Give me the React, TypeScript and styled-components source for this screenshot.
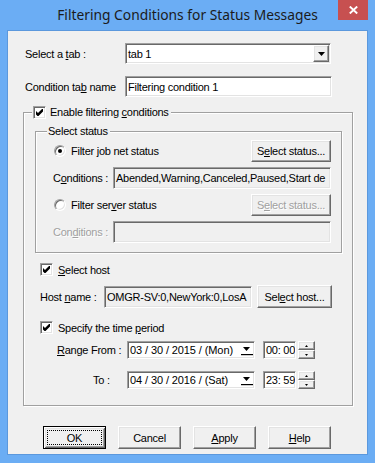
import React from "react";
import styled, { createGlobalStyle, css } from "styled-components";

const GlobalStyle = createGlobalStyle`
  html, body { margin: 0; padding: 0; background: #6badf4; }
  body {
    font-family: "Liberation Sans", Arial, sans-serif;
    font-size: 11px;
    letter-spacing: -0.25px;
    color: #000;
  }
  *, *::before, *::after { box-sizing: border-box; }
  u { text-decoration-thickness: 1px; text-underline-offset: 1px; }
`;

const sunken = css`
  border: 1px solid;
  border-color: #a0a0a0 #ffffff #ffffff #a0a0a0;
  box-shadow: inset 1px 1px 0 #696969, inset -1px -1px 0 #e3e3e3;
`;

const raised = css`
  border: 1px solid;
  border-color: #ffffff #696969 #696969 #ffffff;
  box-shadow: inset -1px -1px 0 #a0a0a0, inset 1px 1px 0 #e3e3e3;
  background: #f0f0f0;
`;

const Window = styled.div`
  width: 375px;
  height: 463px;
  background: #6badf4;
  display: flex;
  flex-direction: column;
`;

const TitleBar = styled.div`
  height: 30px;
  flex: none;
  display: grid;
  grid-template-columns: 37px 1fr 37px;
  align-items: start;
`;

const Title = styled.div`
  grid-column: 2;
  text-align: center;
  font-family: "Noto Sans", "Open Sans", sans-serif;
  font-size: 13.8px;
  letter-spacing: 0;
  line-height: 30px;
  color: #1b1b1b;
  white-space: nowrap;
`;

const CloseButton = styled.div`
  grid-column: 3;
  width: 30px;
  height: 20px;
  background: #c75050;
  display: flex;
  align-items: center;
  justify-content: center;
`;

const Client = styled.div`
  flex: 1;
  margin: 0 7px 8px 7px;
  background: #f0f0f0;
  border: 1px solid #5b98dd;
  display: flex;
  flex-direction: column;
  align-items: flex-start;
`;

const TopGrid = styled.div`
  display: grid;
  grid-template-columns: 100px 207px;
  grid-template-rows: 21px 21px;
  row-gap: 12px;
  align-items: center;
  margin: 12px 0 0 17px;
`;

const Label = styled.span<{ $w?: number; $indent?: number; $disabled?: boolean }>`
  white-space: nowrap;
  flex: none;
  width: ${(p) => (p.$w ? `${p.$w}px` : "auto")};
  padding-left: ${(p) => p.$indent ?? 0}px;
  color: ${(p) => (p.$disabled ? "#a0a0a0" : "#000")};
  text-shadow: ${(p) => (p.$disabled ? "1px 1px 0 #fff" : "none")};
`;

const Field = styled.div<{ $ro?: boolean; $w?: number; $h?: number }>`
  ${sunken};
  width: ${(p) => (p.$w ? `${p.$w}px` : "auto")};
  height: ${(p) => p.$h ?? 22}px;
  flex: ${(p) => (p.$w ? "none" : "1")};
  background: ${(p) => (p.$ro ? "#f0f0f0" : "#ffffff")};
  padding: 0 2px;
  display: flex;
  align-items: center;
  overflow: hidden;
  white-space: nowrap;
`;

const Combo = styled(Field)`
  padding: 0 1px 0 2px;
  justify-content: space-between;
`;

const DropButton = styled.span`
  ${raised};
  width: 16px;
  height: 17px;
  flex: none;
  display: flex;
  align-items: center;
  justify-content: center;
`;

const Group = styled.fieldset<{ $w: number }>`
  width: ${(p) => p.$w}px;
  min-inline-size: 0;
  margin: 0;
  padding: 0;
  border: 1px solid #a0a0a0;
  box-shadow: inset 1px 1px 0 #ffffff, 1px 1px 0 #ffffff;
`;

const OuterGroup = styled(Group)`
  margin: 9px 0 0 15px;
  padding-bottom: 16px;
`;

const InnerGroup = styled(Group)`
  margin: 6px 0 0 11px;
  padding: 0 10px 9px 0;
`;

const Legend = styled.legend<{ $offset: number }>`
  height: 13px;
  line-height: 13px;
  margin-left: ${(p) => p.$offset}px;
  padding: 0 2px 0 1px;
  background: #f0f0f0;
  display: flex;
  align-items: center;
  gap: 4px;
`;

const CheckBox = styled.span`
  ${sunken};
  width: 13px;
  height: 13px;
  flex: none;
  background: #ffffff;
  display: flex;
  align-items: center;
  justify-content: center;
`;

const RadioDot = styled.span<{ $on?: boolean }>`
  width: 12px;
  height: 12px;
  flex: none;
  border-radius: 50%;
  background: #ffffff;
  border: 1px solid;
  border-color: #a0a0a0 #ffffff #ffffff #a0a0a0;
  box-shadow: inset 1px 1px 0 #696969, inset -1px -1px 0 #e3e3e3;
  display: flex;
  align-items: center;
  justify-content: center;
  &::after {
    content: "";
    width: 4px;
    height: 4px;
    border-radius: 50%;
    background: #000;
    display: ${(p) => (p.$on ? "block" : "none")};
  }
`;

const StatusRow = styled.div<{ $top: number }>`
  height: 22px;
  margin-top: ${(p) => p.$top}px;
  padding-left: 18px;
  display: flex;
  align-items: center;
  justify-content: space-between;
`;

const Option = styled.label`
  display: flex;
  align-items: center;
  gap: 5px;
  white-space: nowrap;
`;

const FieldRow = styled.div<{ $top: number; $indent: number; $h?: number }>`
  height: ${(p) => p.$h ?? 22}px;
  margin-top: ${(p) => p.$top}px;
  padding-left: ${(p) => p.$indent}px;
  display: flex;
  align-items: center;
`;

const CheckRow = styled.label<{ $top: number }>`
  height: 13px;
  margin-top: ${(p) => p.$top}px;
  padding-left: 16px;
  display: flex;
  align-items: center;
  gap: 5px;
  white-space: nowrap;
`;

const PushButton = styled.button<{ $w: number; $h?: number; $gap?: number }>`
  ${raised};
  width: ${(p) => p.$w}px;
  height: ${(p) => p.$h ?? 23}px;
  margin-left: ${(p) => p.$gap ?? 0}px;
  flex: none;
  padding: 0;
  font: inherit;
  letter-spacing: inherit;
  color: #000;
  display: flex;
  align-items: center;
  justify-content: center;
  white-space: nowrap;
  &:disabled {
    color: #a0a0a0;
    text-shadow: 1px 1px 0 #ffffff;
  }
`;

const DefaultButton = styled(PushButton)`
  border-color: #000;
  box-shadow: inset 1px 1px 0 #ffffff, inset -1px -1px 0 #696969,
    inset 2px 2px 0 #e3e3e3, inset -2px -2px 0 #a0a0a0;
  padding: 3px;
`;

const FocusRect = styled.span`
  flex: 1;
  align-self: stretch;
  border: 1px dotted #000;
  display: flex;
  align-items: center;
  justify-content: center;
`;

const DateBox = styled(Field)`
  padding: 0 1px 0 2px;
  justify-content: space-between;
  letter-spacing: -0.1px;
`;

const TimeBox = styled(Field)`
  margin-left: 8px;
`;

const Spin = styled.div`
  width: 17px;
  height: 18px;
  margin-left: 2px;
  flex: none;
  display: flex;
  flex-direction: column;
`;

const SpinButton = styled.span`
  ${raised};
  flex: 1;
  display: flex;
  align-items: center;
  justify-content: center;
`;

const ButtonRow = styled.div`
  margin: 20px 0 0 35px;
  display: flex;
  gap: 12px;
`;

const CheckMark = () => (
  <svg width="7" height="7" viewBox="0 0 7 7">
    <polygon points="0,2 2,4 7,-1 7,2.5 2,7.5 0,5.5" fill="#000" />
  </svg>
);

const DownTriangle = () => (
  <svg width="7" height="4" viewBox="0 0 7 4">
    <polygon points="0,0 7,0 3.5,4" fill="#000" />
  </svg>
);

const DateDrop = () => (
  <svg width="12" height="12" viewBox="0 0 12 12">
    <polygon points="2,3 9,3 5.5,7" fill="#000" />
    <rect x="0" y="10" width="12" height="1.2" fill="#000" />
  </svg>
);

const SpinArrow = ({ up }: { up?: boolean }) => (
  <svg width="3" height="2" viewBox="0 0 3 2">
    <polygon points={up ? "1.5,0 3,2 0,2" : "0,0 3,0 1.5,2"} fill="#000" />
  </svg>
);

const CloseGlyph = () => (
  <svg width="9" height="8" viewBox="0 0 9 8">
    <path d="M0.8 0.5 L8.2 7.5 M8.2 0.5 L0.8 7.5" stroke="#fff" strokeWidth="1.9" />
  </svg>
);

function TimeSpin() {
  return (
    <Spin>
      <SpinButton>
        <SpinArrow up />
      </SpinButton>
      <SpinButton>
        <SpinArrow />
      </SpinButton>
    </Spin>
  );
}

export default function App() {
  return (
    <>
      <GlobalStyle />
      <Window>
        <TitleBar>
          <Title>Filtering Conditions for Status Messages</Title>
          <CloseButton>
            <CloseGlyph />
          </CloseButton>
        </TitleBar>
        <Client>
          <TopGrid>
            <Label>
              Select a <u>t</u>ab :
            </Label>
            <Combo $w={206} $h={21}>
              <span>tab 1</span>
              <DropButton>
                <DownTriangle />
              </DropButton>
            </Combo>
            <Label>
              Condition ta<u>b</u> name
            </Label>
            <Field $w={207} $h={21}>
              Filtering condition 1
            </Field>
          </TopGrid>

          <OuterGroup $w={330}>
            <Legend $offset={8}>
              <CheckBox>
                <CheckMark />
              </CheckBox>
              <span>
                Enable filtering <u>c</u>onditions
              </span>
            </Legend>

            <InnerGroup $w={307}>
              <Legend $offset={11}>Select status</Legend>
              <StatusRow $top={2}>
                <Option>
                  <RadioDot $on />
                  Filter job net status
                </Option>
                <PushButton $w={80} $h={22}>
                  S<u>e</u>lect status...
                </PushButton>
              </StatusRow>
              <FieldRow $top={5} $indent={17}>
                <Label $w={60}>
                  C<u>o</u>nditions :
                </Label>
                <Field $ro>Abended,Warning,Canceled,Paused,Start de</Field>
              </FieldRow>
              <StatusRow $top={5}>
                <Option>
                  <RadioDot />
                  <span>
                    Filter ser<u>v</u>er status
                  </span>
                </Option>
                <PushButton $w={80} $h={22} disabled>
                  S<u>e</u>lect status...
                </PushButton>
              </StatusRow>
              <FieldRow $top={5} $indent={17}>
                <Label $w={60} $disabled>
                  Con<u>d</u>itions :
                </Label>
                <Field $ro />
              </FieldRow>
            </InnerGroup>

            <CheckRow $top={10}>
              <CheckBox>
                <CheckMark />
              </CheckBox>
              <span>
                <u>S</u>elect host
              </span>
            </CheckRow>
            <FieldRow $top={9} $indent={16} $h={23}>
              <Label $w={64}>
                Host <u>n</u>ame :
              </Label>
              <Field $ro $w={148}>
                OMGR-SV:0,NewYork:0,LosA
              </Field>
              <PushButton $w={75} $gap={5}>
                Sel<u>e</u>ct host...
              </PushButton>
            </FieldRow>

            <CheckRow $top={13}>
              <CheckBox>
                <CheckMark />
              </CheckBox>
              <span>
                Specify the time <u>p</u>eriod
              </span>
            </CheckRow>
            <FieldRow $top={7} $indent={33} $h={18}>
              <Label $w={70}>
                <u>R</u>ange From :
              </Label>
              <DateBox $w={128} $h={18}>
                <span>03 / 30 / 2015 / (Mon)</span>
                <DateDrop />
              </DateBox>
              <TimeBox $w={33} $h={18}>
                00: 00
              </TimeBox>
              <TimeSpin />
            </FieldRow>
            <FieldRow $top={12} $indent={33} $h={18}>
              <Label $w={70} $indent={36}>
                To :
              </Label>
              <DateBox $w={128} $h={18}>
                <span>04 / 30 / 2016 / (Sat)</span>
                <DateDrop />
              </DateBox>
              <TimeBox $w={33} $h={18}>
                23: 59
              </TimeBox>
              <TimeSpin />
            </FieldRow>
          </OuterGroup>

          <ButtonRow>
            <DefaultButton $w={63}>
              <FocusRect>OK</FocusRect>
            </DefaultButton>
            <PushButton $w={63}>Cancel</PushButton>
            <PushButton $w={63}>
              <u>A</u>pply
            </PushButton>
            <PushButton $w={63}>
              <u>H</u>elp
            </PushButton>
          </ButtonRow>
        </Client>
      </Window>
    </>
  );
}
